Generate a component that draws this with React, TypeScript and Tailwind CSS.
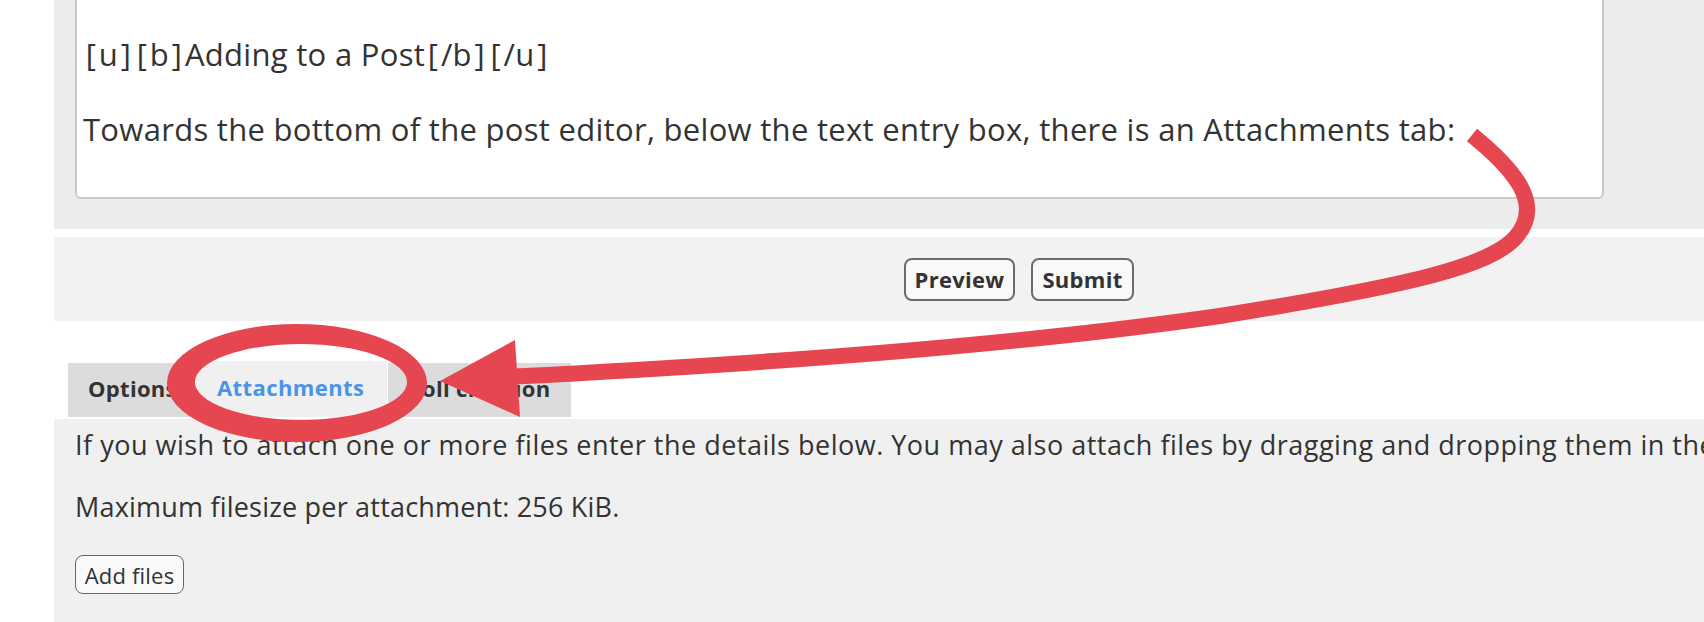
function B({ c }: { c: string }) {
  return <span className="px-[2.7px]">{c}</span>;
}

export default function App() {
  return (
    <div className="relative w-[1704px] h-[622px] overflow-hidden bg-white font-['Open_Sans','DejaVu_Sans',sans-serif] text-[#333333]">
      {/* Editor panel */}
      <div className="ml-[54px] w-[1930px] h-[229px] bg-[#ececec] pl-[21px]">
        <div className="w-[1529px] h-[199px] bg-white border-x-2 border-b-2 border-[#c9c9c9] rounded-b-[6px] pl-[6px] pt-[36px] text-[31px] leading-[37.5px] tracking-[0.3px] whitespace-nowrap">
          <div>
            <B c="[" />u<B c="]" />
            <B c="[" />b<B c="]" />
            Adding to a Post
            <B c="[" />/b<B c="]" />
            <B c="[" />/u<B c="]" />
          </div>
          <div className="mt-[37.5px]">
            Towards the bottom of the post editor, below the text entry box, there is an Attachments tab:
          </div>
        </div>
      </div>

      {/* Submit buttons */}
      <div className="ml-[54px] mt-[8px] w-[1930px] h-[84px] bg-[#f2f2f2] flex items-center justify-center gap-[16px]">
        <button className="w-[111px] h-[43px] rounded-[8px] border-2 border-[#6b6b6b] bg-[#f9f9f9] text-[22px] font-bold tracking-[0.3px] text-[#333333] flex items-center justify-center">
          Preview
        </button>
        <button className="w-[103px] h-[43px] rounded-[8px] border-2 border-[#6b6b6b] bg-[#f9f9f9] text-[22px] font-bold tracking-[0.3px] text-[#333333] flex items-center justify-center">
          Submit
        </button>
      </div>

      {/* Tabs */}
      <div className="mt-[40px] ml-[68px] h-[56px] flex items-end gap-px">
        <div className="w-[127px] h-[54px] bg-[#dcdcdc] pl-[20px] pb-[4px] flex items-center text-[22px] font-bold tracking-[0.3px] text-[#333333] overflow-hidden whitespace-nowrap">
          Options
        </div>
        <div className="w-[191px] h-[56px] bg-[#f0f0f0] pl-[21px] pb-[4px] flex items-center text-[22px] font-bold tracking-[0.4px] text-[#4a94e8] whitespace-nowrap">
          Attachments
        </div>
        <div className="w-[183px] h-[54px] bg-[#dcdcdc] pl-[20px] pb-[4px] flex items-center text-[22px] font-bold tracking-[0.3px] text-[#333333] whitespace-nowrap">
          Poll creation
        </div>
      </div>

      {/* Tab content */}
      <div className="mt-[2px] ml-[54px] w-[1930px] h-[203px] bg-[#f0f0f0] pl-[21px] pt-[8px] text-[27px] leading-[36px] tracking-[0.2px] whitespace-nowrap">
        <p className="tracking-[0.5px]">
          If you wish to attach one or more files enter the details below. You may also attach files by dragging and dropping them in the message box.
        </p>
        <p className="mt-[26px]">Maximum filesize per attachment: 256 KiB.</p>
        <button className="mt-[30px] w-[109px] h-[39px] rounded-[8px] border-[1.5px] border-[#666666] bg-[#f9f9f9] text-[22px] leading-none text-[#333333] flex items-center justify-center">
          Add files
        </button>
      </div>

      {/* Annotation overlay */}
      <svg
        className="absolute left-0 top-0 pointer-events-none"
        width="1704"
        height="622"
        viewBox="0 0 1704 622"
      >
        <path
          d="M1472 135 C1515 170 1545 205 1515 238 C1490 265 1420 284 1220 316 C1080 336 850 360 505 377"
          stroke="#e6464f"
          strokeWidth="16"
          fill="none"
        />
        <polygon points="440,381 515,340 520,417" fill="#e6464f" />
        <path
          fillRule="evenodd"
          fill="#e6464f"
          d="M167 383 a130 59 0 1 0 260 0 a130 59 0 1 0 -260 0 Z M195 382 a106 38 0 1 0 212 0 a106 38 0 1 0 -212 0 Z"
        />
      </svg>
    </div>
  );
}
